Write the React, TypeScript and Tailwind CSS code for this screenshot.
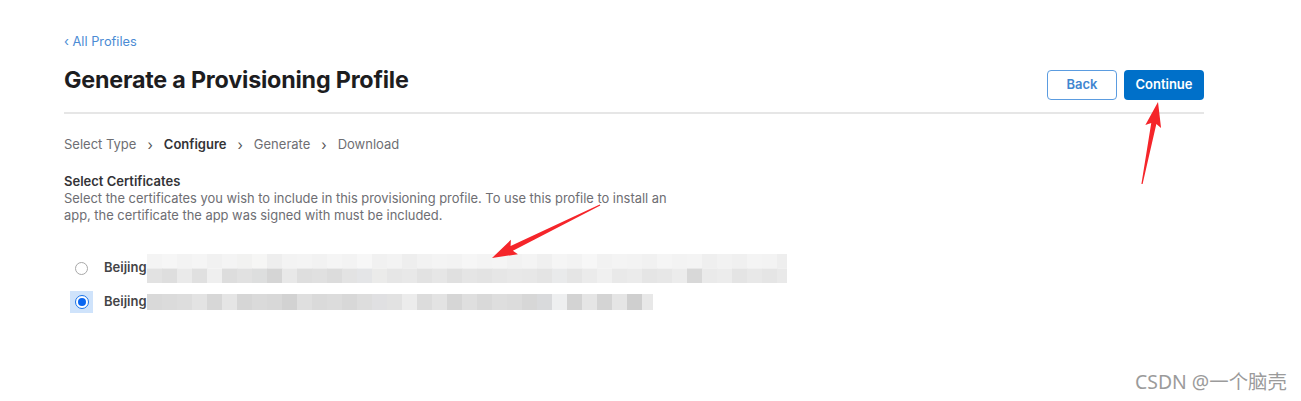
import React from "react";

function arrowPoints(tx: number, ty: number, hx: number, hy: number) {
  const dx = hx - tx;
  const dy = hy - ty;
  const len = Math.sqrt(dx * dx + dy * dy);
  const ux = dx / len;
  const uy = dy / len;
  const nx = -uy;
  const ny = ux;
  const L = 22;
  const W = 8;
  const bx = hx - ux * L;
  const by = hy - uy * L;
  const pts: [number, number][] = [
    [tx + nx * 0.6, ty + ny * 0.6],
    [bx + nx * 2.6, by + ny * 2.6],
    [bx + nx * W - ux * 3, by + ny * W - uy * 3],
    [hx, hy],
    [bx - nx * W - ux * 3, by - ny * W - uy * 3],
    [bx - nx * 2.6, by - ny * 2.6],
    [tx - nx * 0.6, ty - ny * 0.6],
  ];
  return pts.map((p) => p.join(",")).join(" ");
}

const row1Top = [
  "#f4f4f4", "#f6f6f6", "#f3f3f3", "#f5f5f5", "#f1f1f1", "#f4f4f4", "#f2f2f1", "#f6f6f5", "#eeeeee", "#f3f3f3",
  "#f4f4f4", "#f2f2f2", "#f5f5f5", "#f3f3f3", "#f7f7f7", "#f1f1f1", "#f3f3f3", "#eeeeee", "#f2f2f2", "#f4f4f4",
  "#f3f3f3", "#f6f6f6", "#f4f4f4", "#f5f5f5", "#f2f2f2", "#f4f4f4", "#f0f0f0", "#f5f5f5", "#f3f3f3", "#f7f7f7",
  "#f2f2f2", "#f4f4f4", "#f3f3f3", "#f1f1f1", "#f5f5f5", "#f3f3f3", "#f4f4f4", "#efefef", "#f2f2f2", "#f0f0f0",
  "#f4f4f4", "#f3f3f3", "#eeeeee",
];
const row1Bot = [
  "#e2e2e2", "#dedede", "#eaeaea", "#e0e0e0", "#efefef", "#dddddd", "#e1e1e1", "#dddede", "#d5d5d5", "#e8e8e8",
  "#dedede", "#e0e0e0", "#dcdcdc", "#e3e3e3", "#e4e5e7", "#ebebea", "#e6e6e6", "#e8e8e8", "#e2e2e2", "#e6e6e6",
  "#e0e0e0", "#e5e5e5", "#e3e3e3", "#e6e6e6", "#e8e8e8", "#e7e7e7", "#e4e4e4", "#e9eaeb", "#e5e5e5", "#ebebeb",
  "#f0f0f0", "#e9e9e9", "#ebebeb", "#e5e5e5", "#e7e7e7", "#ececec", "#d8d8d8", "#eaeaea", "#ececec", "#e4e4e4",
  "#e8e8e8", "#e5e5e5", "#e9e9e9",
];
const row2 = [
  "#d9d9d9", "#dbdbdb", "#dddddd", "#e3e3e3", "#d7d7d7", "#e5e5e5", "#d6d6d6", "#dadada", "#d8d8d8", "#d2d2d2",
  "#dfdfdf", "#dadada", "#dcdcdc", "#d8d8d8", "#dddddd", "#e0e0e2", "#e2e2e2", "#ececec", "#dcdcdc", "#e3e3e3",
  "#d6d6d6", "#dfdfdf", "#d9d9d9", "#dedede", "#dcdcdc", "#d7d7d7", "#d9dadc", "#eeeff0", "#d3d3d3", "#e5e5e5",
  "#d4d4d4", "#e5e5e5", "#cfcfcf", "#e8e8e8",
];

function Mosaic({ top, bottom, width, height }: { top?: string[]; bottom: string[]; width: number; height: number }) {
  const bw = 15;
  const half = top ? height / 2 : 0;
  return (
    <svg width={width} height={height} viewBox={`0 0 ${width} ${height}`} className="block">
      {top &&
        top.map((c, i) => (
          <rect key={"t" + i} x={i * bw} y={0} width={bw + 0.5} height={half} fill={c} />
        ))}
      {bottom.map((c, i) => (
        <rect key={"b" + i} x={i * bw} y={half} width={bw + 0.5} height={height - half} fill={c} />
      ))}
    </svg>
  );
}

export default function App() {
  return (
    <div
      className="relative w-[1301px] h-[401px] bg-white overflow-hidden"
      style={{ fontFamily: "Inter, 'Noto Sans', 'Noto Sans CJK SC', sans-serif" }}
    >
      <div className="pl-[64px] pr-[97px] pt-[34px]">
        <a className="block text-[12.8px] leading-[16px] text-[#4b8bd4]">‹ All Profiles</a>
        <div className="flex items-start justify-between mt-[18px]">
          <h1 className="text-[23.3px] leading-[26px] font-bold text-[#1d1d1f] tracking-[-0.2px] -mt-[1px]">
            Generate a Provisioning Profile
          </h1>
          <div className="flex gap-[7px] mt-[2px]">
            <button className="w-[70px] h-[30px] rounded-[4px] border border-[#5b9ce0] text-[#3f86d0] text-[13px] font-semibold bg-white">
              Back
            </button>
            <button className="w-[80px] h-[30px] rounded-[4px] bg-[#0070c9] text-white text-[13px] font-semibold">
              Continue
            </button>
          </div>
        </div>
        <div className="h-[2px] bg-[#e6e6e6] mt-[12px]" />
        <div className="flex items-center mt-[22px] text-[13px] leading-[17px] text-[#6e6e73]">
          <span>Select Type</span>
          <span className="mx-[11px] text-[14px] text-[#555]">›</span>
          <span className="font-semibold text-[#333336]">Configure</span>
          <span className="mx-[11px] text-[14px] text-[#555]">›</span>
          <span>Generate</span>
          <span className="mx-[11px] text-[14px] text-[#555]">›</span>
          <span>Download</span>
        </div>
        <div className="mt-[20px] text-[13px] leading-[17px] font-semibold text-[#333336]">Select Certificates</div>
        <p className="w-[612px] text-[12.9px] leading-[17px] text-[#6e6e73]">
          Select the certificates you wish to include in this provisioning profile. To use this profile to install an
          app, the certificate the app was signed with must be included.
        </p>
        <div className="mt-[29px] flex items-center h-[30px]">
          <div className="w-[23px] flex justify-center ml-[6px]">
            <span className="block w-[13px] h-[13px] rounded-full border border-[#a8a8a8] bg-white" />
          </div>
          <span className="ml-[11px] text-[13px] font-semibold text-[#444446]">Beijing</span>
          <Mosaic top={row1Top} bottom={row1Bot} width={640} height={29} />
        </div>
        <div className="mt-[8px] flex items-center h-[22px]">
          <div className="w-[23px] h-[22px] flex items-center justify-center ml-[6px] bg-[#cfe3fb]">
            <span className="w-[14px] h-[14px] rounded-full border-[1.5px] border-[#1a73e8] bg-white flex items-center justify-center">
              <span className="w-[8px] h-[8px] rounded-full bg-[#0a66f0]" />
            </span>
          </div>
          <span className="ml-[11px] text-[13px] font-semibold text-[#444446]">Beijing</span>
          <Mosaic bottom={row2} width={506} height={16} />
        </div>
      </div>

      <svg className="absolute inset-0 pointer-events-none" width={1301} height={401}>
        <polygon points={arrowPoints(1142, 184, 1158, 102)} fill="#f5252a" />
        <polygon points={arrowPoints(600, 205, 492, 258)} fill="#f5252a" />
      </svg>

      <div
        className="absolute left-[1135px] top-[370px] text-[19.4px] leading-[24px] text-[#9b9b9b]"
        style={{ fontFamily: "'Noto Sans', 'Noto Sans CJK SC', sans-serif" }}
      >
        CSDN @一个脑壳
      </div>
    </div>
  );
}
